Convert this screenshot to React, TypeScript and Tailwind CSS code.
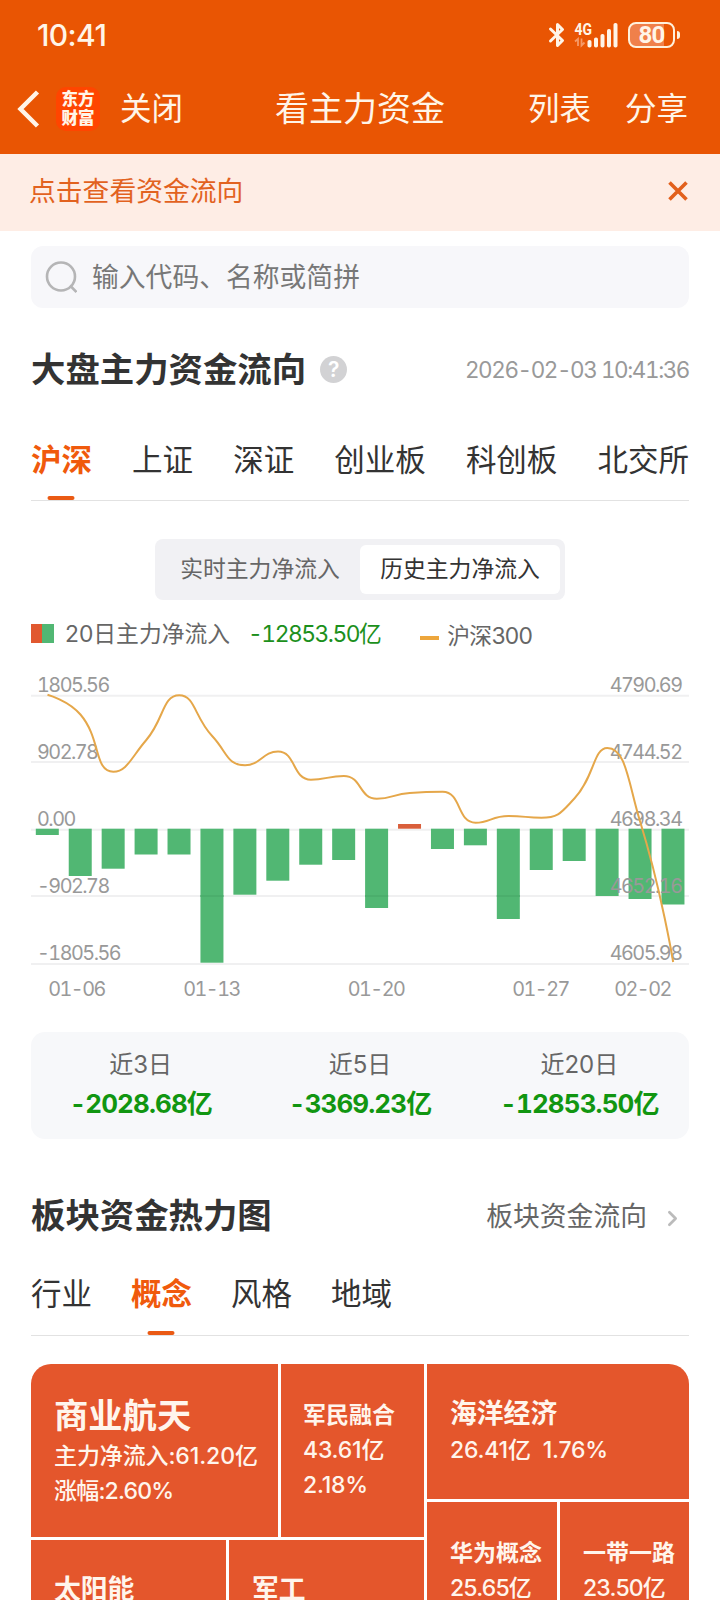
import { ChevronRight } from "lucide-react";
import clsx from "clsx";

const marketTabs = ["沪深", "上证", "深证", "创业板", "科创板", "北交所"];
const sectorTabs = ["行业", "概念", "风格", "地域"];

const summary = [
  { label: "近3日", value: "-2028.68亿" },
  { label: "近5日", value: "-3369.23亿" },
  { label: "近20日", value: "-12853.50亿" },
];

const BASE = 828.7;
const STEP = 32.93;

// end y of every bar, measured from the zero line
const bars = [
  835, 876, 868.7, 854.5, 854.5, 962.7, 894.7, 880.7, 864.7, 860, 908, 824, 849,
  845.3, 919, 870, 861, 896, 899, 904.5,
];

const indexLine = [
  694.7, 714.5, 771.7, 740, 695.3, 736, 765.3, 751.5, 779.7, 776, 798.7, 793,
  791.8, 822.7, 816, 817.7, 798.5, 748, 822, 962,
];

const gridLines = [695.7, 762, 829.8, 896, 964];

const axisLabels = [
  { y: 692, left: "1805.56", right: "4790.69" },
  { y: 759, left: "902.78", right: "4744.52" },
  { y: 826, left: "0.00", right: "4698.34" },
  { y: 893, left: "-902.78", right: "4652.16" },
  { y: 960, left: "-1805.56", right: "4605.98" },
];

const dates = [
  { x: 76.5, text: "01-06" },
  { x: 211.5, text: "01-13" },
  { x: 376, text: "01-20" },
  { x: 540.5, text: "01-27" },
  { x: 642.5, text: "02-02" },
];

type Point = { x: number; y: number };

const clamp = (v: number, a: number, b: number) =>
  Math.min(Math.max(v, Math.min(a, b)), Math.max(a, b));

function smoothPath(pts: Point[], smooth = 0.5) {
  let d = `M${pts[0].x} ${pts[0].y}`;
  let out = pts[0];
  for (let i = 1; i < pts.length; i++) {
    const prev = pts[i - 1];
    const cur = pts[i];
    const next = pts[i + 1];
    let inPt = cur;
    let nextOut = cur;
    if (next) {
      const l1 = Math.hypot(cur.x - prev.x, cur.y - prev.y);
      const l2 = Math.hypot(next.x - cur.x, next.y - cur.y);
      const k = (smooth * l2) / (l1 + l2);
      const ox = clamp(cur.x + (next.x - prev.x) * k, cur.x, next.x);
      const oy = clamp(cur.y + (next.y - prev.y) * k, cur.y, next.y);
      inPt = {
        x: clamp(cur.x - ((ox - cur.x) * l1) / l2, prev.x, cur.x),
        y: clamp(cur.y - ((oy - cur.y) * l1) / l2, prev.y, cur.y),
      };
      nextOut = {
        x: cur.x + ((cur.x - inPt.x) * l2) / l1,
        y: cur.y + ((cur.y - inPt.y) * l2) / l1,
      };
    }
    d += `C${out.x} ${out.y} ${inPt.x} ${inPt.y} ${cur.x} ${cur.y}`;
    out = nextOut;
  }
  return d;
}

function StatusBar() {
  return (
    <div className="flex h-16 items-center justify-between pt-1.5 pr-10 pl-[37px]">
      <span className="text-[30px] font-medium tracking-[-0.6px]">10:41</span>
      <div className="flex items-center">
        <svg className="mr-[9px] h-[26px] w-[17px]" viewBox="0 0 17 26" fill="none" stroke="currentColor" strokeWidth="3" strokeLinejoin="round" strokeLinecap="round">
          <path d="M2.500 7L14.500 18.500L9.500 23.500V2.500L14.500 7.500L2.500 19" />
        </svg>
        <svg className="mr-2.5 h-[26px] w-[44px]" viewBox="0 0 44 26" fill="currentColor">
          <text x="0.500" y="12.500" fontSize="16" fontWeight="700" textLength="17.500" lengthAdjust="spacingAndGlyphs" className="font-['Roboto',sans-serif]">4G</text>
          <path d="M1 19.500l3-2.500v7M7.500 16.500v7l3-3" fill="none" stroke="#f59a68" strokeWidth="1.800" />
          <rect x="13.500" y="18" width="4" height="7.500" rx="1.800" />
          <rect x="20" y="15.500" width="4" height="10" rx="1.800" />
          <rect x="26.500" y="12" width="4" height="13.500" rx="1.800" />
          <rect x="33" y="7" width="4" height="18.500" rx="1.800" />
          <rect x="39.500" y="1" width="4" height="24.500" rx="1.800" />
        </svg>
        <div className="flex h-[26px] w-[47px] items-center justify-center rounded-lg border-2 border-[#fff1dc] bg-linear-to-r from-[#f0804a] from-78% to-transparent to-78% font-['Roboto',sans-serif] text-[24px] font-bold tracking-[-0.8px]">
          80
        </div>
        <div className="ml-[2px] h-2 w-[3px] rounded-r-sm bg-[#fff1dc]" />
      </div>
    </div>
  );
}

function NavBar() {
  return (
    <div className="flex h-[90px] items-center pr-[32px] pl-[17px]">
      <svg className="h-[38px] w-6" viewBox="0 0 24 38" fill="none" stroke="currentColor" strokeWidth="4.500">
        <path d="M20.500 2L3.500 19L20.500 36" />
      </svg>
      <div className="ml-[15px] flex size-[44px] flex-col items-center justify-center rounded-[10px] bg-[#ff4500] text-[16.500px] leading-[19px] font-black">
        <span>东方</span>
        <span>财富</span>
      </div>
      <span className="ml-5 text-[31.500px]">关闭</span>
      <span className="flex-1 pl-[92px] text-[34px]">看主力资金</span>
      <span className="text-[31.500px]">列表</span>
      <span className="ml-[34px] text-[31.500px]">分享</span>
    </div>
  );
}

function Tabs({ items, active, className }: { items: string[]; active: string; className?: string }) {
  return (
    <div className={clsx("flex border-b border-[#e2e2e2] text-[30.500px]", className)}>
      {items.map((item) => (
        <div
          key={item}
          className={clsx(
            "relative flex items-center whitespace-nowrap",
            item === active ? "font-bold text-[#f05a0c]" : "text-[#333]"
          )}
        >
          {item}
          {item === active && (
            <span className="absolute bottom-0 left-1/2 -ml-px h-1 w-[27px] -translate-x-1/2 rounded-full bg-[#ea5a14]" />
          )}
        </div>
      ))}
    </div>
  );
}

function FlowChart() {
  const line = indexLine.map((y, i) => ({ x: 47.5 + STEP * i, y }));
  return (
    <svg className="block h-[342px] w-full" viewBox="31 668 658 342">
      {gridLines.map((y) => (
        <line key={y} x1="31" x2="689" y1={y} y2={y} stroke="#f0f0f1" strokeWidth="2" />
      ))}
      {bars.map((y, i) => (
        <rect
          key={i}
          x={35.8 + STEP * i}
          y={Math.min(y, BASE)}
          width="23"
          height={Math.abs(y - BASE)}
          fill={y < BASE ? "#d95f3b" : "#51b773"}
        />
      ))}
      {[5, 10, 14].map((i) => (
        <rect key={i} x={35.8 + STEP * i} y="895" width="23" height="2" fill="#4bae6c" />
      ))}
      <g fill="#999" fontSize="19.800" letterSpacing="-1.5" className="tabular-nums">
        {axisLabels.map((l) => (
          <g key={l.y}>
            <text x="37" y={l.y}>{l.left}</text>
            <text x="681.500" y={l.y} textAnchor="end">{l.right}</text>
          </g>
        ))}
        {dates.map((d) => (
          <text key={d.text} x={d.x} y="996" textAnchor="middle">{d.text}</text>
        ))}
      </g>
      <path d={smoothPath(line)} fill="none" stroke="#e5a74a" strokeWidth="2" />
    </svg>
  );
}

function HeatMap() {
  return (
    <div className="mt-7 flex h-[300px] gap-[3px] overflow-hidden rounded-t-[20px] text-[23px] leading-[35px] font-medium text-[#fff5ec]">
      <div className="flex w-[393px] flex-col gap-[3px]">
        <div className="flex h-[173px] gap-[3px]">
          <div className="w-[247px] bg-[#e4562c] pt-[28px] pl-[23px] whitespace-nowrap">
            <div className="text-[34.300px] leading-[47px] font-bold">商业航天</div>
            <div className="tracking-[-0.1px]">主力净流入:61.20亿</div>
            <div className="tracking-[-0.8px]">涨幅:2.60%</div>
          </div>
          <div className="flex-1 bg-[#e4562c] pt-[34px] pl-[22px]">
            <div className="font-bold">军民融合</div>
            <div className="tracking-[-0.2px]">43.61亿</div>
            <div className="tracking-[-0.2px]">2.18%</div>
          </div>
        </div>
        <div className="flex flex-1 gap-[3px] text-[26.800px] font-bold">
          <div className="w-[195px] bg-[#e4562c] pt-[32px] pl-[23px]">太阳能</div>
          <div className="flex-1 bg-[#e4562c] pt-[32px] pl-[23px]">军工</div>
        </div>
      </div>
      <div className="flex flex-1 flex-col gap-[3px]">
        <div className="h-[135px] bg-[#e4562c] pt-[32px] pl-[23px]">
          <div className="text-[26.800px] font-bold">海洋经济</div>
          <div className="flex gap-3 pt-0.5 tracking-[-0.2px]">
            <span>26.41亿</span>
            <span>1.76%</span>
          </div>
        </div>
        <div className="flex flex-1 gap-[3px]">
          <div className="w-[130px] bg-[#e4562c] pt-[34px] pl-[23px] whitespace-nowrap">
            <div className="font-bold">华为概念</div>
            <div className="tracking-[-0.8px]">25.65亿</div>
          </div>
          <div className="flex-1 bg-[#e4562c] pt-[34px] pl-[23px] whitespace-nowrap">
            <div className="font-bold">一带一路</div>
            <div className="tracking-[-0.8px]">23.50亿</div>
          </div>
        </div>
      </div>
    </div>
  );
}

export default function App() {
  return (
    <div className="h-[1600px] w-[720px] overflow-hidden bg-white font-['Inter','Noto_Sans_CJK_SC',sans-serif] leading-none text-[#333]">
      <header className="bg-[#e95503] text-[#fff5e8]">
        <StatusBar />
        <NavBar />
      </header>
      <div className="flex h-[77px] items-center justify-between bg-[#feede5] pr-[32px] pb-0.5 pl-[29px] text-[26.800px] text-[#e2621f]">
        <span>点击查看资金流向</span>
        <svg className="-mt-0.5 size-[20px]" viewBox="0 0 20 20" stroke="#e2601c" strokeWidth="3.600">
          <path d="M1.500 1.500L18.500 18.500M18.500 1.500L1.500 18.500" />
        </svg>
      </div>

      <main className="px-[31px]">
        <div className="mt-[15px] flex h-[62px] items-center rounded-xl bg-[#f7f7fa] pl-[14px] text-[26.800px] text-[#777]">
          <svg className="mr-[15px] size-8" viewBox="0 0 32 32" fill="none" stroke="#b5b5b6" strokeWidth="2.600">
            <circle cx="16" cy="15.500" r="14" />
            <path d="M25 24.500L31.500 31" />
          </svg>
          输入代码、名称或简拼
        </div>

        <div className="flex h-[122px] items-center pt-0.5">
          <h2 className="text-[34.400px] font-bold">大盘主力资金流向</h2>
          <span className="-mt-0.5 ml-[14px] flex size-[27px] items-center justify-center rounded-full bg-[#d2d2d4] text-[21px] font-semibold text-white">?</span>
          <span className="ml-auto text-[22.500px] tracking-[-1.45px] text-[#999] tabular-nums">2026-02-03 10:41:36</span>
        </div>

        <Tabs items={marketTabs} active="沪深" className="h-[71px] justify-between leading-[60px] [&>div]:pb-2.5" />

        <div className="mx-auto mt-[38px] flex h-[61px] w-[410px] rounded-lg bg-[#f1f1f4] p-[5px] text-[22.800px]">
          <div className="flex flex-1 items-center justify-center text-[#666]">实时主力净流入</div>
          <div className="my-px flex w-[200px] items-center justify-center rounded-md bg-white text-[#333]">历史主力净流入</div>
        </div>

        <div className="flex h-[68px] items-center text-[22.800px] text-[#666]">
          <span className="-mt-0.5 h-[19px] w-[23px] bg-linear-to-r from-[#e1582f] from-50% to-[#51b773] to-50%" />
          <span className="mt-px ml-[11px]">20日主力净流入</span>
          <span className="mt-px ml-[18px] tracking-[-1.5px] text-[#1c901c] tabular-nums">-12853.50亿</span>
          <span className="mt-[7px] ml-[40px] h-1 w-[19px] bg-[#eda63c]" />
          <span className="mt-1 ml-2 tracking-[-0.7px]">沪深300</span>
        </div>

        <FlowChart />

        <div className="mt-[22px] grid h-[107px] grid-cols-3 content-center rounded-[14px] bg-[#f7f8fa] pb-[3px] text-center">
          {summary.map((s) => (
            <div key={s.label}>
              <div className="text-[24px] leading-[39px] text-[#666]">{s.label}</div>
              <div className="text-[26px] leading-[39px] font-bold tracking-[-0.9px] text-[#119611] tabular-nums">{s.value}</div>
            </div>
          ))}
        </div>

        <div className="mt-[47px] flex h-[60px] items-center">
          <h2 className="text-[34.400px] font-bold">板块资金热力图</h2>
          <span className="mr-[13px] ml-auto text-[26.800px] text-[#666]">板块资金流向</span>
          <ChevronRight className="mt-1 mr-1 size-[25px] text-[#bbb]" strokeWidth={2.6} />
        </div>

        <Tabs items={sectorTabs} active="概念" className="h-[90px] gap-[39px] [&>div]:pt-2" />

        <HeatMap />
      </main>
    </div>
  );
}
